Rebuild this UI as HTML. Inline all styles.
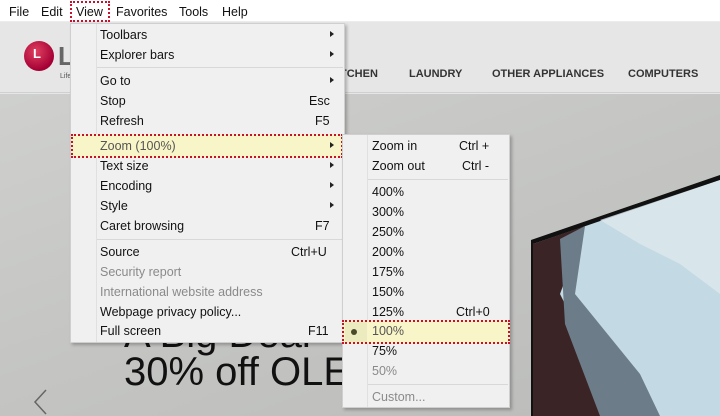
<!DOCTYPE html>
<html><head><meta charset="utf-8"><style>
*{margin:0;padding:0;box-sizing:border-box}
body{width:720px;height:416px;overflow:hidden;position:relative;font-family:"Liberation Sans",sans-serif;font-size:12.5px;color:#111;background:#c8c9c7}
.a{position:absolute}
.t{position:absolute;white-space:nowrap;line-height:14px}
.g{color:#8a8a8a}
.arr{position:absolute;width:0;height:0;border-top:3.5px solid transparent;border-bottom:3.5px solid transparent;border-left:4px solid #222}
.sep{position:absolute;height:1px;background:#d8d8d8}
</style></head><body>
<div class="a" style="left:0;top:22px;width:720px;height:72px;background:#e6e6e6"></div>
<div class="a" style="left:0;top:94px;width:720px;height:322px;background:linear-gradient(160deg,#cfd0ce 0%,#c4c5c3 50%,#bbbcba 100%)"></div>
<svg class="a" style="left:0;top:94px" width="720" height="322">
<polygon points="531,146 720,81 720,322 531,322" fill="#111"/>
<polygon points="533,150 720,86 720,322 533,322" fill="#c3d9e3"/>
<polygon points="533,150 585,132 560,200 600,280 620,322 533,322" fill="#3b2426"/>
<polygon points="560,145 585,132 575,200 640,280 660,322 600,322 565,230" fill="#6c7c88"/>
<polygon points="600,126 720,86 720,200 680,170 640,150" fill="#dde8ee" opacity=".8"/>
</svg>
<div class="a" style="left:0;top:92px;width:720px;height:1px;background:#d0d0d0"></div>
<div class="a" style="left:24px;top:41px;width:30px;height:30px;border-radius:50%;background:radial-gradient(circle at 40% 35%,#e04060,#a50034 70%)"></div>
<div class="t" style="left:33px;top:47px;color:#fff;font-weight:bold;font-size:13px">L</div>
<div class="t" style="left:58px;top:43px;font-size:26px;line-height:26px;font-weight:bold;color:#666">L</div>
<div class="t" style="left:60px;top:70px;font-size:7px;color:#555">Life</div>
<div class="t" style="left:340px;top:67px;font-size:11px;font-weight:bold;color:#333">TCHEN</div>
<div class="t" style="left:409px;top:67px;font-size:11px;font-weight:bold;color:#333">LAUNDRY</div>
<div class="t" style="left:492px;top:67px;font-size:11px;font-weight:bold;color:#333">OTHER APPLIANCES</div>
<div class="t" style="left:628px;top:67px;font-size:11px;font-weight:bold;color:#333">COMPUTERS</div>
<div class="t" style="left:124px;top:350px;font-size:40px;line-height:44px;color:#111">30% off OLED</div>
<div class="t" style="left:124px;top:312px;font-size:40px;line-height:44px;color:#111">A Big Deal</div>
<svg class="a" style="left:30px;top:388px" width="20" height="28"><path d="M16 2 L5 14 L16 26" fill="none" stroke="#666" stroke-width="1.5"/></svg>
<div class="a" style="left:0;top:0;width:720px;height:22px;background:#fff;border-bottom:1px solid #ececec"></div>
<div class="t" style="left:9px;top:5px">File</div>
<div class="t" style="left:41px;top:5px">Edit</div>
<div class="a" style="left:70px;top:1px;width:40px;height:21px;border:2px dotted #c8102e"></div>
<div class="t" style="left:76px;top:5px">View</div>
<div class="t" style="left:116px;top:5px">Favorites</div>
<div class="t" style="left:179px;top:5px">Tools</div>
<div class="t" style="left:222px;top:5px">Help</div>
<div class="a" style="left:70px;top:23px;width:275px;height:320px;background:#f0f0f0;border:1px solid #cfcfcf;box-shadow:2px 2px 3px rgba(0,0,0,.25)"></div>
<div class="a" style="left:96px;top:24px;width:1px;height:318px;background:#e0e0e0"></div>
<div class="sep" style="left:97px;top:67px;width:246px"></div>
<div class="sep" style="left:97px;top:239px;width:246px"></div>
<div class="t" style="left:100px;top:28px">Toolbars</div><div class="arr" style="left:330px;top:31px"></div>
<div class="t" style="left:100px;top:48px">Explorer bars</div><div class="arr" style="left:330px;top:51px"></div>
<div class="t" style="left:100px;top:74px">Go to</div><div class="arr" style="left:330px;top:77px"></div>
<div class="t" style="left:100px;top:94px">Stop</div><div class="t" style="left:309px;top:94px">Esc</div>
<div class="t" style="left:100px;top:114px">Refresh</div><div class="t" style="left:315px;top:114px">F5</div>
<div class="a" style="left:71px;top:134px;width:272px;height:24px;background:#f8f5c8;border:2px dotted #c8102e"></div>
<div class="t" style="left:100px;top:139px;color:#555">Zoom (100%)</div><div class="arr" style="left:330px;top:142px"></div>
<div class="t" style="left:100px;top:159px">Text size</div><div class="arr" style="left:330px;top:162px"></div>
<div class="t" style="left:100px;top:179px">Encoding</div><div class="arr" style="left:330px;top:182px"></div>
<div class="t" style="left:100px;top:199px">Style</div><div class="arr" style="left:330px;top:202px"></div>
<div class="t" style="left:100px;top:219px">Caret browsing</div><div class="t" style="left:315px;top:219px">F7</div>
<div class="t" style="left:100px;top:245px">Source</div><div class="t" style="left:291px;top:245px">Ctrl+U</div>
<div class="t g" style="left:100px;top:265px">Security report</div>
<div class="t g" style="left:100px;top:285px">International website address</div>
<div class="t" style="left:100px;top:305px">Webpage privacy policy...</div>
<div class="t" style="left:100px;top:324px">Full screen</div><div class="t" style="left:308px;top:324px">F11</div>
<div class="a" style="left:342px;top:134px;width:168px;height:274px;background:#f0f0f0;border:1px solid #cfcfcf;box-shadow:2px 2px 3px rgba(0,0,0,.25)"></div>
<div class="a" style="left:367px;top:135px;width:1px;height:272px;background:#e0e0e0"></div>
<div class="sep" style="left:368px;top:179px;width:140px"></div>
<div class="sep" style="left:368px;top:384px;width:140px"></div>
<div class="t" style="left:372px;top:139px">Zoom in</div><div class="t" style="left:459px;top:139px">Ctrl +</div>
<div class="t" style="left:372px;top:159px">Zoom out</div><div class="t" style="left:462px;top:159px">Ctrl -</div>
<div class="t" style="left:372px;top:185px">400%</div>
<div class="t" style="left:372px;top:205px">300%</div>
<div class="t" style="left:372px;top:225px">250%</div>
<div class="t" style="left:372px;top:245px">200%</div>
<div class="t" style="left:372px;top:265px">175%</div>
<div class="t" style="left:372px;top:285px">150%</div>
<div class="t" style="left:372px;top:305px">125%</div><div class="t" style="left:456px;top:305px">Ctrl+0</div>
<div class="a" style="left:342px;top:320px;width:168px;height:24px;background:#f8f5c8;border:2px dotted #c8102e"></div>
<div class="a" style="left:345px;top:322px;width:22px;height:20px;background:#ecebc0"></div>
<div class="a" style="left:351px;top:329px;width:6px;height:6px;border-radius:50%;background:#4a4a2a"></div>
<div class="t" style="left:372px;top:324px;color:#555">100%</div>
<div class="t" style="left:372px;top:344px">75%</div>
<div class="t g" style="left:372px;top:364px">50%</div>
<div class="t g" style="left:372px;top:390px">Custom...</div>
</body></html>
